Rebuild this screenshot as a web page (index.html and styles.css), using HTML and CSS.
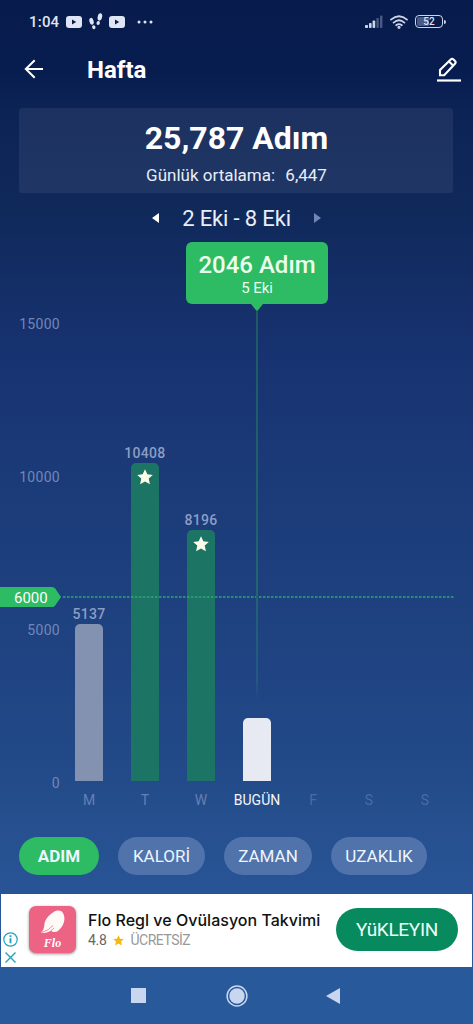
FILE: index.html
```html
<!DOCTYPE html>
<html lang="tr">
<head>
<meta charset="utf-8">
<title>Hafta</title>
<link rel="stylesheet" href="styles.css">
</head>
<body>
<div class="status">
  <span class="clock">1:04</span>
  <svg class="tube" width="16" height="12" viewBox="0 0 16 12"><rect width="16" height="12" rx="3" fill="#dfe5f2"/><path d="M6 3.6v4.8L10.2 6z" fill="#081b4c"/></svg>
  <svg class="steps" width="14" height="17" viewBox="0 0 14 17" fill="#dfe5f2"><ellipse cx="2.500" cy="8.300" rx="2.100" ry="3.500" transform="rotate(-14 2.5 8.3)"/><ellipse cx="4.800" cy="14.200" rx="1.700" ry="2" transform="rotate(-14 4.8 14.2)"/><ellipse cx="10.900" cy="3.900" rx="2.200" ry="3.800" transform="rotate(12 10.9 3.9)"/><ellipse cx="9.200" cy="10" rx="1.700" ry="2" transform="rotate(12 9.2 10)"/></svg>
  <svg class="tube" width="16" height="12" viewBox="0 0 16 12"><rect width="16" height="12" rx="3" fill="#dfe5f2"/><path d="M6 3.6v4.8L10.2 6z" fill="#081b4c"/></svg>
  <svg class="more" width="16" height="4" viewBox="0 0 16 4" fill="#dfe5f2"><circle cx="2" cy="2" r="1.500"/><circle cx="8" cy="2" r="1.500"/><circle cx="14" cy="2" r="1.500"/></svg>
  <svg class="signal" width="18" height="13" viewBox="0 0 18 13" fill="#cdd5e8"><rect y="10" width="3" height="3" rx=".8"/><rect x="4" y="8" width="2.6" height="5" rx=".8"/><rect x="7.6" y="5.5" width="2.6" height="7.5" rx=".8"/><g fill="#4a5a86"><rect x="11.4" y="3" width="2.4" height="10" rx=".8"/><rect x="15" y="0.5" width="2.4" height="12.5" rx=".8"/></g></svg>
  <svg class="wifi" width="18" height="14" viewBox="0 0 18 14" fill="none" stroke="#cdd5e8" stroke-width="1.8" stroke-linecap="round"><path d="M1 4.6Q9-2.2 17 4.6M3.6 7.6Q9 3 14.4 7.6M6.2 10.3Q9 8 11.8 10.3"/><circle cx="9" cy="12.3" r=".7"/></svg>
  <span class="battery"><span class="charge">52</span></span><span class="cap"></span>
</div>
<header class="header">
  <svg width="20" height="20" viewBox="0 0 20 20" fill="none" stroke="#fff" stroke-width="2"><path d="M19 10H2M10.7 1.2L1.8 10l8.9 8.8"/></svg>
  <h1 class="title">Hafta</h1>
  <svg class="edit" width="24" height="25" viewBox="0 0 24 25" fill="none" stroke="#fff" stroke-width="2.100"><path d="M3 18.2V13L13.7 2.4q1.4-1.3 2.8 0l1.5 1.5q1.3 1.4 0 2.8L7.2 18.2zM12 4.5l4.1 4.1"/><path d="M0 23.500h24" stroke-width="2.200"/></svg>
</header>
<section class="summary">
  <div class="total">25,787 Adım</div>
  <div class="average">Günlük ortalama: <span class="avg">6,447</span></div>
</section>
<div class="range">
  <svg width="7" height="10" viewBox="0 0 7 10"><path d="M7 0v10L0 5z" fill="#fff"/></svg>
  <span class="dates">2 Eki - 8 Eki</span>
  <svg width="7" height="10" viewBox="0 0 7 10"><path d="M0 0v10l7-5z" fill="#6f86b8"/></svg>
</div>
<section class="chart">
  <div class="axis"><span>15000</span><span>10000</span><span>5000</span><span>0</span></div>
  <div class="plot">
    <div class="col"><span class="value">5137</span><div class="bar missed" style="height:157px"></div><span class="day">M</span></div>
    <div class="col"><span class="value">10408</span><div class="bar reached" style="height:318px"><svg class="star" width="16" height="16" viewBox="0 0 16 16"><path d="M8 .2l2.3 5.1 5.5.6-4.1 3.7 1.2 5.6L8 12.4l-4.9 2.8 1.2-5.6L.2 5.9l5.5-.6z"/></svg></div><span class="day">T</span></div>
    <div class="col"><span class="value">8196</span><div class="bar reached" style="height:251px"><svg class="star" width="16" height="16" viewBox="0 0 16 16"><path d="M8 .2l2.3 5.1 5.5.6-4.1 3.7 1.2 5.6L8 12.4l-4.9 2.8 1.2-5.6L.2 5.9l5.5-.6z"/></svg></div><span class="day">W</span></div>
    <div class="col"><div class="bar today" style="height:63px"></div><span class="day current">BUGÜN</span></div>
    <div class="col"><span class="day future">F</span></div>
    <div class="col"><span class="day future">S</span></div>
    <div class="col"><span class="day future">S</span></div>
  </div>
  <div class="goal"><svg class="tag" width="61" height="20" viewBox="0 0 61 20"><path d="M0 0h52q2 0 3.2 1.5L61 10l-5.8 8.500Q54 20 52 20H0z" fill="#2dbb63"/></svg><span class="goal-value">6000</span><svg class="dots" width="393" height="2" viewBox="0 0 393 2"><path d="M2 1h391" stroke="#31a576" stroke-width="1.300" stroke-dasharray="2.500 1.500"/></svg></div>
  <div class="marker">
    <div class="bubble"><span class="count">2046 Adım</span><span class="date">5 Eki</span></div>
    <svg width="12" height="7" viewBox="0 0 12 7"><path d="M0 0h12L7 6.300q-1 1-2 0z" fill="#2dbb63"/></svg>
    <div class="stem"></div>
  </div>
</section>
<nav class="metrics">
  <span class="chip active">ADIM</span><span class="chip calories">KALORİ</span><span class="chip time">ZAMAN</span><span class="chip distance">UZAKLIK</span>
</nav>
<section class="ad">
  <div class="controls">
    <svg width="15" height="15" viewBox="0 0 15 15" fill="none" stroke="#20a3bd"><circle cx="7.500" cy="7.500" r="6.700" stroke-width="1.200"/><path d="M7.500 6.300v5M7.500 3.300v1.800" stroke-width="1.900"/></svg>
    <svg width="11" height="11" viewBox="0 0 11 11" stroke="#20a3bd" stroke-width="1.400"><path d="M.5.5l10 10M10.500.5l-10 10"/></svg>
  </div>
  <div class="logo">
    <svg width="24" height="24" viewBox="0 0 24 24"><path d="M0 22.500C2.500 20 3 18.500 3.300 15 4 9 8 5 12 2.500 16-.5 21 0 22.500 4 25 10 22 17 17.500 20.500 15 22.500 12 22.500 10 20.500 7 22.800 3 23.500 0 22.500z" fill="#fffaf6"/><path d="M1 22.300q7-1.800 11-6.800M10 20.500q2-1 3-2.500" fill="none" stroke="#ef7f9b" stroke-width=".9"/></svg>
    <span class="flo">Flo</span>
  </div>
  <div class="copy">
    <div class="name">Flo Regl ve Ovülasyon Takvimi</div>
    <div class="meta"><span class="rating">4.8</span><svg width="11" height="11" viewBox="0 0 16 16"><path d="M8 .2l2.300 5.100 5.500.6-4.100 3.700 1.200 5.600L8 12.400l-4.900 2.800 1.200-5.600L.2 5.900l5.500-.6z" fill="#f3b90c"/></svg><span class="price">ÜCRETSİZ</span></div>
  </div>
  <span class="install">YüKLEYIN</span>
</section>
<div class="system">
  <svg width="15" height="15" viewBox="0 0 15 15"><path d="M0 0h15v15H0z" fill="#c9d6ef"/></svg>
  <svg width="22" height="22" viewBox="0 0 22 22"><circle cx="11" cy="11" r="9.900" fill="none" stroke="#c9d6ef" stroke-width="1.500"/><circle cx="11" cy="11" r="7.700" fill="#c9d6ef"/></svg>
  <svg class="back" width="14" height="16" viewBox="0 0 14 16"><path d="M14 0v16L0 8z" fill="#c9d6ef"/></svg>
</div>
</body>
</html>
```
FILE: styles.css
```css
* { box-sizing: border-box; }
body {
  margin: 0;
  width: 473px;
  height: 1024px;
  overflow: hidden;
  display: flex;
  flex-direction: column;
  font-family: Roboto, "Liberation Sans", sans-serif;
  color: #fff;
  background: linear-gradient(#071c4c 0, #081d4f 70px, #0c2355 110px, #10295b 210px, #173270 350px, #1b3b78 480px, #1f4281 640px, #224a88 770px, #26508f 830px, #285496 890px, #28599b 967px);
}
svg { display: block; flex: none; }
.status { height: 43px; display: flex; align-items: center; padding-left: 29px; color: #dfe5f2; flex: none; }
.clock { width: 30px; font-size: 15px; font-weight: 500; letter-spacing: .2px; white-space: nowrap; }
.tube { margin-left: 7px; }
.steps { margin-left: 7px; }
.steps + .tube { margin-left: 6px; }
.more { margin-left: 12px; }
.signal { margin-left: 212px; }
.wifi { margin-left: 7px; }
.battery { margin-left: 7px; width: 28px; height: 13px; border: 1.500px solid #cdd5e8; border-radius: 4px; display: flex; padding: 1px; }
.charge { width: 100%; background: linear-gradient(90deg, #4b5a85 52%, transparent 52%); border-radius: 2px; font-size: 10px; line-height: 10px; font-weight: 500; text-align: center; }
.cap { width: 2px; height: 4px; margin-left: 1px; background: #cdd5e8; border-radius: 0 2px 2px 0; }
.header { height: 65px; flex: none; display: flex; align-items: center; padding: 0 12px 13px 24px; }
.title { margin: 1px 0 0 43px; font-size: 24px; line-height: 28px; font-weight: 700; }
.edit { margin-left: auto; }
.summary { flex: none; height: 85px; margin: 0 20px 0 19px; background: rgba(255,255,255,.065); border-radius: 3px; text-align: center; padding: 11px 0 0 1px; }
.total { font-size: 32px; line-height: 38px; font-weight: 700; }
.average { font-size: 17px; line-height: 22px; margin-top: 7px; color: #e8edf7; }
.avg { margin-left: 6px; }
.range { flex: none; height: 49px; display: flex; justify-content: center; gap: 23px; align-items: center; padding-top: 1px; }
.dates { font-size: 22px; line-height: 26px; letter-spacing: -.15px; padding-top: 1px; color: #e9eef8; }
.chart { flex: none; position: relative; height: 571px; margin-top: -1px; display: grid; grid-template-columns: 61px 1fr; padding: 72px 19px 0 0; }
.axis { height: 479px; padding-right: 1px; display: flex; flex-direction: column; justify-content: space-between; text-align: right; font-size: 14px; line-height: 20px; letter-spacing: .3px; color: #7187b7; }
.axis { margin-top: 1px; }
.plot { height: 499px; display: grid; grid-template-columns: repeat(7, 56px); }
.col { display: flex; flex-direction: column; justify-content: flex-end; align-items: center; }
.value { font-size: 14px; line-height: 20px; letter-spacing: .3px; font-weight: 500; color: #8c9dc4; }
.bar { width: 28px; border-radius: 5px 5px 0 0; flex: none; }
.missed { background: #8292b0; }
.reached { background: #1c7465; display: flex; justify-content: center; padding-top: 6px; }
.star { fill: #fffbe9; }
.today { background: #e7eaf3; }
.day { height: 31px; padding-top: 9px; font-size: 14px; line-height: 20px; color: #6580b4; white-space: nowrap; }
.current { color: #f3f6fb; }
.future { color: #496ca9; }
.goal { position: absolute; left: 0; top: 346px; height: 20px; display: flex; align-items: center; }
.goal-value { margin-left: -47px; width: 47px; font-size: 15px; line-height: 20px; padding-top: 1px; }
.marker { position: absolute; left: 186px; top: 1px; width: 142px; display: flex; flex-direction: column; align-items: center; }
.bubble { width: 142px; height: 62px; border-radius: 6px; background: #2dbb63; display: flex; flex-direction: column; align-items: center; padding-top: 9px; color: #ecffec; }
.count { font-size: 24px; line-height: 28px; font-weight: 500; white-space: nowrap; }
.date { font-size: 15px; line-height: 18px; letter-spacing: -.1px; }
.stem { width: 2px; height: 390px; background: linear-gradient(#1d5a66, #22656f 70%, #235884 95%, transparent); }
.metrics { flex: none; height: 82px; display: flex; gap: 19px; padding: 25px 0 0 19px; }
.chip { height: 38px; border-radius: 19px; background: #5073ab; display: flex; align-items: center; justify-content: center; font-size: 17px; color: #edf5ff; }
.active { width: 80px; background: #2dbb63; font-weight: 700; }
.calories { width: 87px; }
.time { width: 88px; }
.distance { width: 96px; }
.ad { flex: none; height: 73px; margin: 0 1px; background: #fff; display: flex; color: #111; }
.controls { width: 28px; padding: 38px 0 0 2px; display: flex; flex-direction: column; gap: 5px; }
.controls svg + svg { margin-left: 2px; }
.logo { width: 47px; height: 47px; margin-top: 12px; border-radius: 7px; background: #ec6384; display: flex; flex-direction: column; align-items: center; padding-top: 4px; box-shadow: 0 1px 3px rgba(0,0,0,.45); color: #fff; }
.flo { font: italic 700 12px/14px "Liberation Serif", serif; margin-top: 2px; }
.copy { width: 249px; padding: 15px 0 0 12px; white-space: nowrap; }
.name { font: 500 16px/22px Inter, sans-serif; letter-spacing: .02px; }
.meta { display: flex; align-items: center; gap: 6px; font-size: 14px; line-height: 18px; color: #999; }
.rating { color: #666; letter-spacing: -.3px; }
.price { margin-left: 1px; letter-spacing: -.5px; }
.install { width: 122px; height: 43px; margin-top: 14px; margin-left: 11px; border-radius: 22px; background: #078a5d; color: #ecfff5; font-size: 19px; letter-spacing: -.3px; display: flex; align-items: center; justify-content: center; }
.system { height: 57px; flex: none; display: flex; align-items: center; padding-left: 131px; gap: 80px; background: #28599b; }
.back { margin-left: -2px; }
```
